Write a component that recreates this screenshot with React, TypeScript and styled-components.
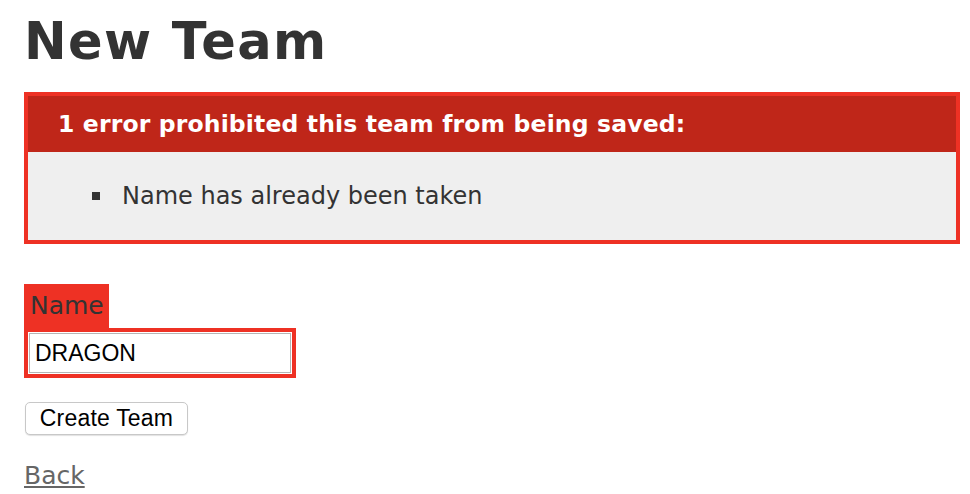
import { FC } from "react";
import styled, { createGlobalStyle } from "styled-components";

const GlobalStyle = createGlobalStyle`
  html, body {
    margin: 0;
    padding: 0;
    background: #fff;
  }
  body {
    color: #333;
    font-family: "DejaVu Sans", Verdana, sans-serif;
    font-size: 24px;
    line-height: 36px;
  }
`;

const Page = styled.div`
  padding: 0 10px 0 24px;
`;

const Title = styled.h1`
  margin: 12px 0 20px;
  font-size: 51px;
  line-height: 60px;
  font-weight: bold;
  letter-spacing: 1.4px;
  color: #333;
`;

const ErrorBox = styled.div`
  box-sizing: border-box;
  width: 936px;
  border: 4px solid #ee3124;
  background: #efefef;
  margin-bottom: 40px;
`;

const ErrorTitle = styled.h2`
  margin: 0;
  height: 56px;
  padding-left: 30px;
  background: #bf2619;
  color: #fff;
  font-size: 23.5px;
  line-height: 56px;
  font-weight: bold;
  letter-spacing: 0.15px;
`;

const ErrorList = styled.ul`
  margin: 0;
  padding: 26px 0 26px 64px;
  list-style: none;
`;

const ErrorItem = styled.li`
  display: flex;
  align-items: center;
  gap: 22px;
  font-size: 24px;
  line-height: 36px;

  &::before {
    content: "";
    width: 8px;
    height: 8px;
    background: #333;
  }
`;

const FieldWithErrors = styled.div<{ $pad?: string }>`
  display: table;
  padding: ${({ $pad }) => $pad ?? "4px"};
  background: #ee3124;
`;

const Label = styled.label`
  display: block;
  font-size: 25px;
  line-height: 36px;
  color: #333;
`;

const TextInput = styled.input`
  display: block;
  box-sizing: border-box;
  width: 264px;
  height: 42px;
  margin: 0;
  padding: 0 6px;
  border: 1px solid #fff;
  box-shadow: inset 0 0 0 1px #b5b5b5;
  background: #fff;
  font-family: "Liberation Sans", Arial, sans-serif;
  font-size: 23px;
  color: #000;
  outline: none;
`;

const Actions = styled.div`
  margin-top: 22px;
`;

const SubmitButton = styled.button`
  box-sizing: border-box;
  width: 163px;
  height: 33px;
  margin: 0 0 0 1px;
  padding: 0;
  border: 1px solid #c8c8c8;
  border-radius: 5px;
  background: #fff;
  box-shadow: 0 1px 1px rgba(0, 0, 0, 0.12);
  font-family: "Liberation Sans", Arial, sans-serif;
  font-size: 23px;
  letter-spacing: 0.2px;
  color: #000;
  cursor: pointer;
`;

const BackLink = styled.a`
  display: inline-block;
  margin-top: 22px;
  color: #666;
  font-size: 25px;
  line-height: 36px;
  text-decoration: underline;
`;

const errors = ["Name has already been taken"];

const App: FC = () => {
  return (
    <Page>
      <GlobalStyle />
      <Title>New Team</Title>
      <ErrorBox>
        <ErrorTitle>
          {errors.length} error prohibited this team from being saved:
        </ErrorTitle>
        <ErrorList>
          {errors.map((msg) => (
            <ErrorItem key={msg}>{msg}</ErrorItem>
          ))}
        </ErrorList>
      </ErrorBox>
      <form onSubmit={(e) => e.preventDefault()}>
        <FieldWithErrors $pad="4px 5px 4px 6px">
          <Label htmlFor="team_name">Name</Label>
        </FieldWithErrors>
        <FieldWithErrors>
          <TextInput id="team_name" type="text" defaultValue="DRAGON" />
        </FieldWithErrors>
        <Actions>
          <SubmitButton type="submit">Create Team</SubmitButton>
        </Actions>
      </form>
      <BackLink href="#">Back</BackLink>
    </Page>
  );
};

export default App;
